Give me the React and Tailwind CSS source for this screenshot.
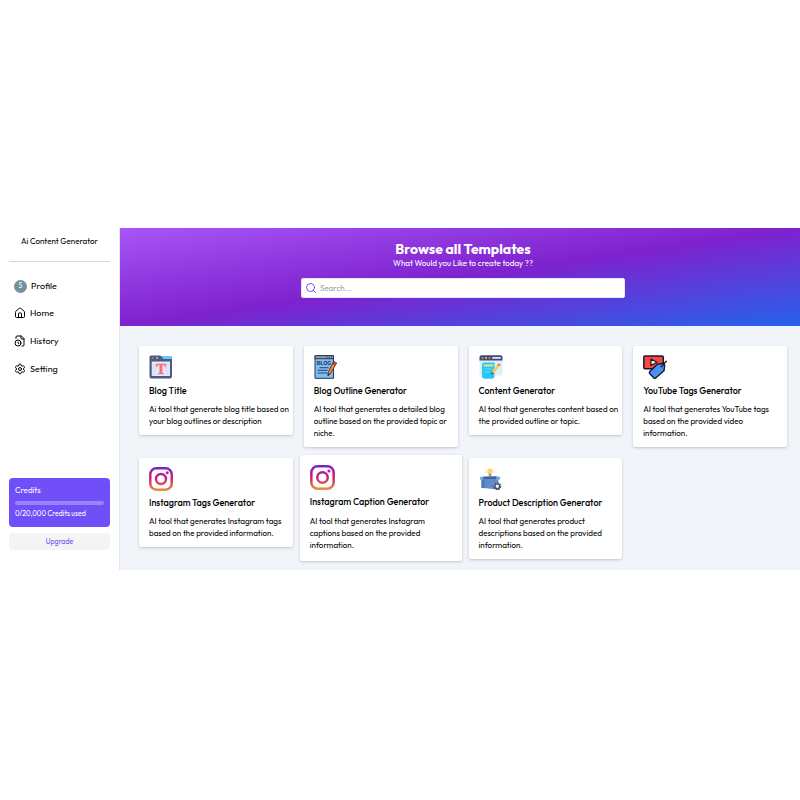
import React from "react";
import { FileClock, House, Search, Settings } from "lucide-react";

function BlogTitleIcon({ className }) {
  return (
    <svg viewBox="0 0 24 24" className={className} aria-hidden="true">
      <path d="M12 1h10a1 1 0 0 1 1 1v5H10z" fill="#5ccbf9" />
      <path d="M2 .5h9.5L14.500 4H23v17.500a2 2 0 0 1-2 2H2.500a2 2 0 0 1-2-2V2A1.500 1.500 0 0 1 2 .5z" fill="#4b5a80" />
      <path d="M2.700 6.500h18.300v14.500H2.700z" fill="#e4e9fb" />
      <path d="M3.500 10h3M3.500 13h4M3.500 16h4M3.500 19h3M17 10h3M16 13h4M16 16h4M17 19h3" stroke="#c7d0f0" strokeWidth=".8" />
      <circle cx="3.700" cy="3" r="1" fill="#f4647a" />
      <circle cx="8" cy="3" r="1" fill="#a5dc79" />
      <text x="11.900" y="19" textAnchor="middle" fontSize="15" fontWeight="700" fontFamily="Liberation Serif, serif" fill="#f5717b" stroke="#f5717b" strokeWidth=".5">T</text>
    </svg>
  );
}

function BlogOutlineIcon({ className }) {
  return (
    <svg viewBox="0 0 24 24" className={className} aria-hidden="true">
      <path d="M1 .7h18.500v22.600H1z" fill="#7dbdf8" stroke="#27384d" strokeWidth="1" />
      <path d="M1 .7h18.500v3H1z" fill="#9b9fa5" stroke="#27384d" strokeWidth="1" />
      <path d="M12.500 2.200h1M14.700 2.200h1M16.900 2.200h1" stroke="#27384d" strokeWidth="1" />
      <text x="10" y="10" textAnchor="middle" fontSize="5" fontWeight="700" fontFamily="Liberation Sans, sans-serif" fill="#1d2c42">BLOG</text>
      <path d="M5.500 12.700h9M3.500 15.300h10M3.500 18h9.500" stroke="#27384d" strokeWidth=".9" />
      <path d="m18.700 8.300 2.800 1.500-5.200 9.200-2.400 1.800.1-3.200z" fill="#fb8b24" stroke="#38281f" strokeWidth=".8" />
      <path d="m18.700 8.300 1.200-1.900 3 1.600-1.400 1.900z" fill="#ef3e57" stroke="#38281f" strokeWidth=".6" />
      <path d="m14 17.800 2 1.200-2.200 1.900z" fill="#27384d" />
    </svg>
  );
}

function ContentIcon({ className }) {
  return (
    <svg viewBox="0 0 24 24" className={className} aria-hidden="true">
      <path d="M.5 5h23v13.500a2 2 0 0 1-2 2h-19a2 2 0 0 1-2-2z" fill="#d9f3fe" />
      <path d="M2.500.3h19a2 2 0 0 1 2 2V5.500H.5V2.300a2 2 0 0 1 2-2z" fill="#46466f" />
      <circle cx="3.500" cy="2.900" r="1" fill="#59d584" />
      <circle cx="7" cy="2.900" r="1" fill="#ffd25b" />
      <circle cx="10.500" cy="2.900" r="1" fill="#f77" />
      <path d="M14 2.900h7" stroke="#dcecff" strokeWidth="1.700" strokeLinecap="round" />
      <path d="M5 7.500h10.500V21a2.700 2.700 0 0 1-2.700 2.700H5.700A2.700 2.700 0 0 1 3 21V9.500a2 2 0 0 1 2-2z" fill="#27c8f7" />
      <path d="M5.500 10.500h8" stroke="#f9e36e" strokeWidth="2" strokeLinecap="round" />
      <path d="M5.500 14h7M5.500 17h5" stroke="#6fdcfd" strokeWidth="1" />
      <path d="m18.200 9.500 2.400 1.800-5.700 7.200-2.800 1.200.6-3z" fill="#ffca4d" />
      <path d="m18.200 9.500 1.200-1.300 2.400 1.800-1.200 1.300z" fill="#f1656b" />
      <path d="m12.700 16.700 2.200 1.800-2.900 1.300z" fill="#46466f" />
    </svg>
  );
}

function YoutubeTagsIcon({ className }) {
  return (
    <svg viewBox="0 0 24 24" className={className} aria-hidden="true">
      <rect x=".8" y="1" width="19.500" height="12.700" rx="1.200" fill="#fb4742" stroke="#141b29" strokeWidth="1.500" />
      <path d="m8 4 5.800 3.300L8 10.500z" fill="#fff" stroke="#141b29" strokeWidth="1.200" strokeLinejoin="round" />
      <path d="m14.300 9.200 5.700-.8 1.700 1.600-.7 5.800-8.300 7.200a1.300 1.300 0 0 1-1.800-.1l-4.200-4.500a1.300 1.300 0 0 1 .1-1.900z" fill="#4c91f7" stroke="#141b29" strokeWidth="1.400" strokeLinejoin="round" />
      <path d="m18.200 11.700 5.100-5.400" stroke="#141b29" strokeWidth="1.300" strokeLinecap="round" />
      <path d="m11.800 14.300 2.800 3M9.800 16.200l2.500 2.700" stroke="#3f82ea" strokeWidth=".7" />
    </svg>
  );
}

function InstagramIcon({ className, gradientId }) {
  return (
    <svg viewBox="0 0 24 24" className={className} aria-hidden="true">
      <defs>
        <linearGradient id={gradientId} x1="0" y1="0" x2="0" y2="24" gradientUnits="userSpaceOnUse">
          <stop offset="0" stopColor="#7024c4" />
          <stop offset=".25" stopColor="#a91da5" />
          <stop offset=".48" stopColor="#c91c77" />
          <stop offset=".72" stopColor="#dc4c56" />
          <stop offset="1" stopColor="#e69a38" />
        </linearGradient>
      </defs>
      <g fill="none" stroke={`url(#${gradientId})`} strokeWidth="2.400">
        <rect x="1.300" y="1.300" width="21.400" height="21.400" rx="6" />
        <circle cx="12" cy="12" r="5" />
      </g>
      <circle cx="18.200" cy="5.800" r="1.500" fill="#a91da5" />
    </svg>
  );
}

function ProductIcon({ className }) {
  return (
    <svg viewBox="0 0 24 24" className={className} aria-hidden="true">
      <path d="M11 1.500V.7M6.800 2l.6.500M15.200 2l-.6.500M6 5h.8M15.300 5h.8" stroke="#f3c84e" strokeWidth=".8" />
      <circle cx="11" cy="4.500" r="2.800" fill="#fbd667" />
      <path d="M9.800 6.700h2.400v2.600H9.800z" fill="#8b8fa0" />
      <path d="m5 9.500 12-.2 3.500 2-3 1.500H4L1 11.500z" fill="#3f639c" />
      <path d="M2.500 12h16.800v9l-3 1.300L2.500 20.800z" fill="#5f8ccd" />
      <path d="m2.500 12 3 .3v8.900l-3-.4z" fill="#4d78b8" />
      <path d="m1 10 4.500-.7L3.500 13 .8 12.600zM17 9.300l4.500.7-.7 2.600-3.300.4z" fill="#7ba4dc" />
      <circle cx="18.300" cy="19.300" r="3.300" fill="#dce3ef" stroke="#465064" strokeWidth="1.400" strokeDasharray="1.700 .8" />
      <circle cx="18.300" cy="19.300" r="2.300" fill="#eef2f8" stroke="#465064" strokeWidth="1.200" />
    </svg>
  );
}

const templates = [
  { name: "Blog Title", desc: "Ai tool that generate blog title based on your blog outlines or description", Icon: BlogTitleIcon },
  { name: "Blog Outline Generator", desc: "AI tool that generates a detailed blog outline based on the provided topic or niche.", Icon: BlogOutlineIcon },
  { name: "Content Generator", desc: "AI tool that generates content based on the provided outline or topic.", Icon: ContentIcon },
  { name: "YouTube Tags Generator", desc: "AI tool that generates YouTube tags based on the provided video information.", Icon: YoutubeTagsIcon },
  { name: "Instagram Tags Generator", desc: "AI tool that generates Instagram tags based on the provided information.", Icon: InstagramIcon, gradientId: "ig-tags" },
  { name: "Instagram Caption Generator", desc: "AI tool that generates Instagram captions based on the provided information.", Icon: InstagramIcon, gradientId: "ig-caption", active: true },
  { name: "Product Description Generator", desc: "AI tool that generates product descriptions based on the provided information.", Icon: ProductIcon },
];

const links = [
  { label: "Home", Icon: House },
  { label: "History", Icon: FileClock },
  { label: "Setting", Icon: Settings },
];

function Card({ name, desc, Icon, gradientId, active }) {
  return (
    <a
      href="#"
      className={
        active
          ? "-mx-1 -my-[3px] block rounded-xs bg-white p-[10px] shadow-[0_1px_3px_rgba(0,0,0,0.2)]"
          : "block rounded-xs bg-white pt-[9px] pr-[2px] pb-2 pl-[10px] shadow-[0_1px_3px_rgba(0,0,0,0.2)]"
      }
    >
      <Icon className={active ? "size-[25px]" : "size-6"} gradientId={gradientId} />
      <h2 className="mt-[6px] text-[9px] leading-[12px] font-medium whitespace-nowrap">{name}</h2>
      <p className={active ? "mt-[7px] text-[8px] leading-[12px]" : "mt-[6px] text-[8px] leading-[12px]"}>{desc}</p>
    </a>
  );
}

function Sidebar() {
  return (
    <aside className="flex w-[120px] shrink-0 flex-col border-r border-gray-200 px-[9px] pb-5 text-black">
      <div className="border-b border-gray-300 pt-[7px] pb-[14px] text-center text-[8px] leading-[12px]">
        Ai Content Generator
      </div>
      <nav className="mt-[17px] flex flex-col px-[5px] text-[9px] leading-[14px]">
        <a href="#" className="flex items-center gap-1">
          <span className="flex size-[13px] items-center justify-center rounded-full bg-[#73909d] text-[7px] text-white">S</span>
          Profile
        </a>
        <div className="mt-[13px] flex flex-col gap-[14px]">
          {links.map(({ label, Icon }) => (
            <a key={label} href="#" className="flex items-center gap-1">
              <Icon className="size-3" />
              {label}
            </a>
          ))}
        </div>
      </nav>
      <section className="mt-auto rounded-sm bg-[#704ef8] px-[6px] pt-[6px] pb-2 text-white">
        <h2 className="text-[8px] leading-[12px]">Credits</h2>
        <div className="mt-[5px] h-1 rounded-full bg-[#9b83fb]" />
        <p className="mt-[4px] text-[7px] leading-[10px]">0/20,000 Credits used</p>
      </section>
      <button type="button" className="mt-[6px] h-[17px] rounded-sm bg-[#f4f4f4] text-[7px] leading-[10px] text-[#704ef8]">
        Upgrade
      </button>
    </aside>
  );
}

export default function App() {
  return (
    <div className="flex min-h-screen flex-col justify-center bg-white pb-[2px] font-[Outfit,Lato,sans-serif]">
      <div className="flex">
        <Sidebar />
        <main className="min-w-0 flex-1 bg-[#f1f5f9]">
          <header className="flex flex-col items-center bg-[linear-gradient(to_bottom_right,#a855f7,#7e22ce,#2563eb)] pt-[12px] pb-7 pl-[6px] text-white">
            <h1 className="text-[14px] leading-[18px] font-bold">Browse all Templates</h1>
            <p className="text-[8px] leading-[10px]">What Would you Like to create today ??</p>
            <div className="mt-[10px] flex h-5 w-[324px] max-w-full items-center gap-[3px] rounded-xs border border-gray-200 bg-white px-[3px]">
              <Search className="size-3 text-[#704ef8]" />
              <input
                type="text"
                aria-label="Search"
                placeholder="Search..."
                className="min-w-0 flex-1 bg-transparent text-[8px] leading-[12px] text-black outline-none placeholder:text-gray-400"
              />
            </div>
          </header>
          <div className="grid grid-cols-4 items-start gap-[11px] pt-5 pr-[13px] pb-[11px] pl-[19px] text-black">
            {templates.map((t) => (
              <Card key={t.name} {...t} />
            ))}
          </div>
        </main>
      </div>
    </div>
  );
}
